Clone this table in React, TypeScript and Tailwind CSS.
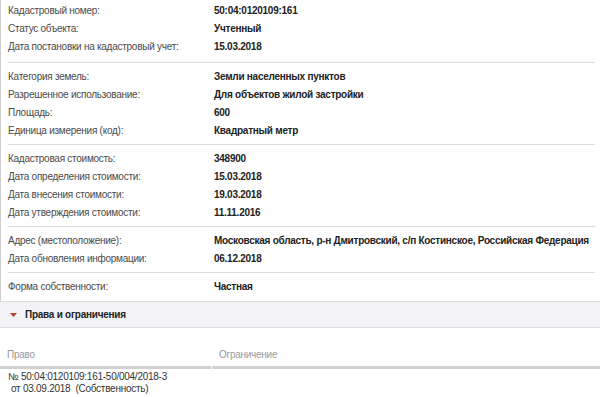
import React from "react";

type Row = [string, string];

const sections: Row[][] = [
  [
    ["Кадастровый номер:", "50:04:0120109:161"],
    ["Статус объекта:", "Учтенный"],
    ["Дата постановки на кадастровый учет:", "15.03.2018"],
  ],
  [
    ["Категория земель:", "Земли населенных пунктов"],
    ["Разрешенное использование:", "Для объектов жилой застройки"],
    ["Площадь:", "600"],
    ["Единица измерения (код):", "Квадратный метр"],
  ],
  [
    ["Кадастровая стоимость:", "348900"],
    ["Дата определения стоимости:", "15.03.2018"],
    ["Дата внесения стоимости:", "19.03.2018"],
    ["Дата утверждения стоимости:", "11.11.2016"],
  ],
  [
    ["Адрес (местоположение):", "Московская область, р-н Дмитровский, с/п Костинское, Российская Федерация"],
    ["Дата обновления информации:", "06.12.2018"],
  ],
];

function InfoRow({ label, value }: { label: string; value: string }) {
  return (
    <div className="grid grid-cols-[206px_1fr] h-[18px] items-center pl-[7px]">
      <div className="text-[#4a4a4a] whitespace-nowrap">{label}</div>
      <div className="font-bold text-[#222] whitespace-nowrap">{value}</div>
    </div>
  );
}

export default function App() {
  return (
    <div
      className="w-[600px] h-[397px] bg-white overflow-hidden text-[10px] leading-[12px] tracking-[-0.26px]"
      style={{ fontFamily: '"Liberation Sans", Arial, sans-serif' }}
    >
      <div className="border-l border-[#cfcfcf]">
        {sections.map((rows, i) => (
          <div key={i} className={i === 0 ? "pt-[2px]" : "pt-[5px]"}>
            {rows.map(([l, v]) => (
              <InfoRow key={l} label={l} value={v} />
            ))}
            <div className={i === 0 ? "h-[6px]" : "h-[4px]"} />
            <div className="ml-[7px] mr-[5px] h-px bg-[#dcdcdc]" />
          </div>
        ))}
        <div className="pt-[5px] pb-[5px]">
          <InfoRow label="Форма собственности:" value="Частная" />
        </div>
      </div>
      <div className="h-[27px] bg-[#f3f2f4] border-t border-b border-[#dcdcdc] flex items-center">
        <svg width="7" height="4" viewBox="0 0 7 4" className="ml-[10px] mr-[8px]">
          <polygon points="0,0 7,0 3.5,4" fill="#b5402a" />
        </svg>
        <span className="font-bold text-[#222]">Права и ограничения</span>
      </div>
      <div className="grid grid-cols-[212px_1fr] pt-[21px]">
        <div className="pl-[7px] text-[#999] h-[17px]">Право</div>
        <div className="pl-[7px] text-[#999] h-[17px]">Ограничение</div>
        <div className="h-[3px] bg-[#d0d0d0] mr-[1px]" />
        <div className="h-[3px] bg-[#d0d0d0]" />
        <div className="pl-[8px] pt-[2px] text-[#333] leading-[11.5px]">
          <div>№ 50:04:0120109:161-50/004/2018-3</div>
          <div className="pl-[3px] whitespace-pre">от 03.09.2018  (Собственность)</div>
        </div>
        <div />
      </div>
      <div className="h-px bg-[#dcdcdc] mt-[3px]" />
    </div>
  );
}
